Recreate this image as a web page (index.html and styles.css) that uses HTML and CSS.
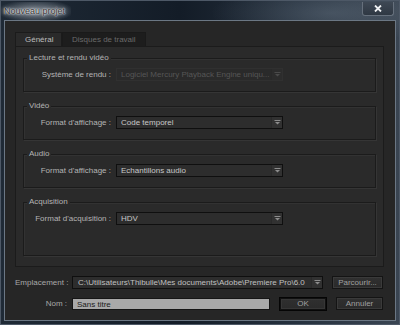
FILE: index.html
```html
<!DOCTYPE html>
<html lang="fr">
<head>
<meta charset="utf-8">
<title>Nouveau projet</title>
<link rel="stylesheet" href="styles.css">
</head>
<body>
<div class="window">
  <div class="titlebar">
    <span class="title">Nouveau projet</span>
    <div class="close">
      <svg width="8" height="7" viewBox="0 0 8 7"><path d="M1 0.5 L7 6.5 M7 0.5 L1 6.5" stroke="#eef0f2" stroke-width="1.8"/></svg>
    </div>
  </div>
  <div class="client">
    <div class="tabs">
      <div class="tab active">Général</div>
      <div class="tab">Disques de travail</div>
    </div>
    <div class="panel">
      <div class="group g-short">
        <span class="legend">Lecture et rendu vidéo</span>
        <div class="row">
          <span class="label">Système de rendu :</span>
          <div class="select disabled">
            <span class="value">Logiciel Mercury Playback Engine uniqu...</span>
            <span class="arrow"><svg width="7" height="5" viewBox="0 0 7 5"><rect x="0.5" y="0" width="6" height="1" fill="#4a4a4a"/><polygon points="1,2 6,2 3.5,4.5" fill="#4a4a4a"/></svg></span>
          </div>
        </div>
      </div>
      <div class="group g-short">
        <span class="legend">Vidéo</span>
        <div class="row">
          <span class="label">Format d'affichage :</span>
          <div class="select">
            <span class="value">Code temporel</span>
            <span class="arrow"><svg width="7" height="5" viewBox="0 0 7 5"><rect x="0.5" y="0" width="6" height="1" fill="#8c8c8c"/><polygon points="1,2 6,2 3.5,4.5" fill="#8c8c8c"/></svg></span>
          </div>
        </div>
      </div>
      <div class="group g-short">
        <span class="legend">Audio</span>
        <div class="row">
          <span class="label">Format d'affichage :</span>
          <div class="select">
            <span class="value">Echantillons audio</span>
            <span class="arrow"><svg width="7" height="5" viewBox="0 0 7 5"><rect x="0.5" y="0" width="6" height="1" fill="#8c8c8c"/><polygon points="1,2 6,2 3.5,4.5" fill="#8c8c8c"/></svg></span>
          </div>
        </div>
      </div>
      <div class="group g-tall">
        <span class="legend">Acquisition</span>
        <div class="row">
          <span class="label">Format d'acquisition :</span>
          <div class="select">
            <span class="value">HDV</span>
            <span class="arrow"><svg width="7" height="5" viewBox="0 0 7 5"><rect x="0.5" y="0" width="6" height="1" fill="#8c8c8c"/><polygon points="1,2 6,2 3.5,4.5" fill="#8c8c8c"/></svg></span>
          </div>
        </div>
      </div>
    </div>
    <div class="bottom-row first">
      <span class="blabel">Emplacement :</span>
      <div class="select path">
        <span class="value">C:\Utilisateurs\Thibulle\Mes documents\Adobe\Premiere Pro\6.0</span>
        <span class="arrow"><svg width="7" height="5" viewBox="0 0 7 5"><rect x="0.5" y="0" width="6" height="1" fill="#8c8c8c"/><polygon points="1,2 6,2 3.5,4.5" fill="#8c8c8c"/></svg></span>
      </div>
      <div class="button browse">Parcourir...</div>
    </div>
    <div class="bottom-row">
      <span class="blabel">Nom :</span>
      <div class="textfield">Sans titre</div>
      <div class="button ok">OK</div>
      <div class="button cancel">Annuler</div>
    </div>
  </div>
</div>
</body>
</html>
```

FILE: styles.css
```css
* { box-sizing: border-box; }
html, body { margin: 0; padding: 0; }
body {
  width: 400px;
  height: 325px;
  overflow: hidden;
  font-family: "Liberation Sans", Arial, sans-serif;
  font-size: 8px;
  background: #1c2631;
}
.window {
  width: 400px;
  height: 325px;
  background:
    radial-gradient(ellipse 120px 30px at 330px 12px, rgba(120,135,150,0.35), rgba(120,135,150,0) 100%),
    linear-gradient(90deg, #1f2a36 0%, #131c27 45%, #26313e 75%, #3a4552 100%);
  border: 1px solid #4d5866;
  display: flex;
  flex-direction: column;
}
.titlebar {
  height: 19px;
  display: flex;
  align-items: flex-start;
}
.title {
  font-size: 9px;
  color: #303030;
  margin-top: 1px;
  padding: 4px 6px 4px 3px;
  line-height: 10px;
  background: radial-gradient(ellipse 55% 65% at 50% 50%, rgba(170,178,186,0.7), rgba(140,150,160,0.3) 70%, rgba(140,150,160,0) 100%);
  text-shadow: 0 0 1px #ffffff, 0 0 2px rgba(255,255,255,0.9), 0 0 4px rgba(240,244,248,0.8);
}
.close {
  margin-left: auto;
  margin-right: 5px;
  margin-top: 1px;
  width: 32px;
  height: 14px;
  border: 1px solid #66707c;
  border-top: none;
  border-radius: 0 0 3px 3px;
  background: linear-gradient(#3e4854, #2f3843);
  display: flex;
  align-items: center;
  justify-content: center;
}
.client {
  margin: 0 3px 0 3px;
  height: 301px;
  border: 1px solid #6b7784;
  background: #262626;
  padding: 11px 11px 0 10px;
}
.tabs {
  display: flex;
  height: 14px;
}
.tab {
  height: 14px;
  line-height: 13px;
  color: #6a6a6a;
  background: #1d1d1d;
  border: 1px solid #1a1a1a;
  border-bottom: none;
  padding-left: 9px;
  white-space: nowrap;
}
.tab.active {
  color: #bdbdbd;
  background: #2a2a2a;
  width: 47px;
  border-color: #1b1b1b;
}
.tab:not(.active) { width: 84px; }
.panel {
  height: 221px;
  background: #2a2a2a;
  border: 1px solid #1b1b1b;
  padding: 11px 7px 0 7px;
}
.group {
  border: 1px solid #1b1b1b;
  box-shadow: 1px 1px 0 #353535, inset 1px 1px 0 #323232;
  margin-bottom: 14px;
}
.g-short { height: 34px; }
.g-tall { height: 54px; }
.legend {
  display: inline-block;
  height: 10px;
  line-height: 10px;
  margin-top: -6px;
  margin-left: 3px;
  padding: 0 2px;
  background: #2a2a2a;
  color: #b4b4b4;
  vertical-align: top;
}
.row {
  display: flex;
  align-items: center;
  height: 13px;
}
.label {
  width: 87px;
  text-align: right;
  color: #b4b4b4;
  margin-right: 5px;
}
.select {
  width: 167px;
  height: 13px;
  display: flex;
  border: 1px solid #0f0f0f;
  background: #2d2d2d;
  color: #c8c8c8;
}
.select .value {
  flex: 1;
  padding-left: 4px;
  line-height: 11px;
  white-space: nowrap;
  overflow: hidden;
}
.select .arrow {
  width: 11px;
  display: flex;
  align-items: center;
  justify-content: center;
  background: #313131;
  border-left: 1px solid #292929;
}
.select.disabled {
  border-color: #303030;
  background: #2a2a2a;
  color: #565656;
}
.select.disabled .arrow { background: #2c2c2c; }
.bottom-row {
  display: flex;
  align-items: center;
  height: 13px;
  margin-top: 8px;
}
.bottom-row.first { margin-top: 9px; }
.blabel {
  width: 52px;
  text-align: right;
  color: #a8a8a8;
  margin-right: 5px;
  white-space: nowrap;
}
.select.path {
  width: 251px;
  margin-right: 9px;
}
.select.path .value { padding-left: 5px; color: #c0c0c0; }
.textfield {
  width: 198px;
  height: 12px;
  line-height: 11px;
  padding-left: 4px;
  background: #a9a9a9;
  border: 1px solid #161616;
  color: #1a1a1a;
  margin-right: 9px;
}
.button {
  height: 13px;
  line-height: 11px;
  text-align: center;
  color: #a0a0a0;
  background: linear-gradient(#303030, #2a2a2a);
  border: 1px solid #141414;
  box-shadow: inset 0 0 0 1px #3a3a3a;
}
.browse { width: 51px; }
.ok {
  width: 48px;
  height: 14px;
  border: 1px solid #050505;
  box-shadow: inset 0 0 0 1px #111, inset 0 0 0 2px #363636;
  margin-right: 9px;
}
.cancel { width: 47px; }
```
